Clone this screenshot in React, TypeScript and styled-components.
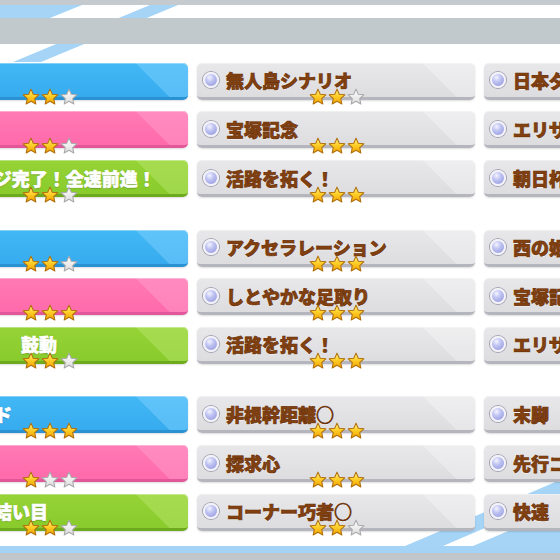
import React, { useId } from "react";
import styled, { createGlobalStyle, css } from "styled-components";

type Tone = "blue" | "pink" | "green" | "gray";

const GlobalStyle = createGlobalStyle`
  html, body { margin: 0; padding: 0; background: #ffffff; }
  body { width: 560px; height: 560px; overflow: hidden; font-family: "Noto Sans CJK JP", "Noto Sans", sans-serif; }
`;

const Page = styled.div`
  position: relative;
  width: 560px;
  height: 560px;
  overflow: hidden;
  background: #ffffff;
  display: flex;
  flex-direction: column;
`;

const Backdrop = styled.svg`
  position: absolute;
  left: 0;
  top: 0;
  z-index: 0;
`;

const TopStrip = styled.div`
  position: relative;
  z-index: 1;
  height: 5px;
  background: #c4cacd;
`;

const TopGap = styled.div`
  height: 13px;
`;

const HeaderBand = styled.div`
  position: relative;
  z-index: 1;
  height: 26px;
  background: #c1c9cd;
`;

const Main = styled.main`
  position: relative;
  z-index: 1;
  flex: 1;
  padding-top: 18.7px;
`;

const Groups = styled.div`
  display: flex;
  flex-direction: column;
  gap: 32.5px;
  margin-left: -90px;
`;

const Group = styled.section`
  display: grid;
  grid-template-columns: repeat(3, 278px);
  column-gap: 9px;
  row-gap: 11.7px;
`;

const tones = {
  blue: { top: "#42b8f5", bottom: "#36acef", edge: "#2a91d2", sheen: "rgba(130,210,255,0.45)" },
  pink: { top: "#ff7ab5", bottom: "#ff6aab", edge: "#e2579a", sheen: "rgba(255,160,205,0.45)" },
  green: { top: "#96d336", bottom: "#89cb2c", edge: "#6eaa1e", sheen: "rgba(185,232,110,0.45)" },
  gray: { top: "#e8e8ea", bottom: "#dddde0", edge: "#b5b5bd", sheen: "rgba(255,255,255,0.28)" },
};

const Card = styled.div<{ $tone: Tone }>`
  position: relative;
  box-sizing: border-box;
  height: 37px;
  border-radius: 5px;
  display: flex;
  align-items: center;
  gap: 7px;
  padding: 1px 0 0 ${(p) => (p.$tone === "gray" ? 6 : 30)}px;
  ${(p) => {
    const t = tones[p.$tone];
    return css`
      background:
        linear-gradient(45deg, transparent calc(100% - 37px), ${t.sheen} calc(100% - 37px)),
        linear-gradient(to bottom, ${t.top}, ${t.bottom});
      border-bottom: 3px solid ${t.edge};
    `;
  }}
  box-shadow: inset 0 1px 0 rgba(255, 255, 255, 0.35), 0 1px 2px rgba(0, 0, 0, 0.14);
`;

const Radio = styled.span`
  flex: none;
  width: 12px;
  height: 12px;
  border-radius: 50%;
  border: 2px solid #f2f2f8;
  box-shadow: 0 0 0 1px #a0a0b2;
  background: radial-gradient(circle at 38% 30%, #f4f4ff 0%, #bfc3f2 38%, #8c92da 100%);
`;

const Label = styled.span<{ $tone: Tone }>`
  font-family: "Noto Sans CJK JP", "Noto Sans", sans-serif;
  font-weight: 900;
  font-size: 18px;
  line-height: 1;
  white-space: pre;
  ${(p) =>
    p.$tone === "gray"
      ? css`
          color: #82410f;
          -webkit-text-stroke: 0.7px #6c3109;
          text-shadow: 0 1px 0 rgba(255, 255, 255, 0.7);
        `
      : css`
          color: #ffffff;
          -webkit-text-stroke: 0.6px #ffffff;
          text-shadow: 0 1px 1px rgba(0, 0, 0, 0.22), 0 0 2px rgba(0, 0, 0, 0.12);
        `}
`;

const StarRow = styled.div`
  position: absolute;
  left: 112px;
  top: 25.5px;
  display: flex;
  gap: 1px;
  z-index: 2;
`;

const StarSvg = styled.svg`
  display: block;
  width: 18px;
  height: 18px;
`;

const STAR =
  "12,1.5 15.06,8.29 22.46,9.1 16.95,14.11 18.47,21.4 12,17.7 5.53,21.4 7.05,14.11 1.54,9.1 8.94,8.29";

function Star({ on }: { on: boolean }) {
  const id = useId().replace(/:/g, "");
  return (
    <StarSvg viewBox="0 0 24 24">
      <defs>
        <linearGradient id={`g${id}`} x1="0" y1="0" x2="0" y2="1">
          {on ? (
            <>
              <stop offset="0" stopColor="#fff38a" />
              <stop offset="0.45" stopColor="#ffd02a" />
              <stop offset="1" stopColor="#f0a000" />
            </>
          ) : (
            <>
              <stop offset="0" stopColor="#ffffff" />
              <stop offset="1" stopColor="#dcdcdc" />
            </>
          )}
        </linearGradient>
      </defs>
      <polygon
        points={STAR}
        fill={`url(#g${id})`}
        stroke={on ? "#b0700e" : "#a9a9ab"}
        strokeWidth="1.4"
        strokeLinejoin="round"
      />
    </StarSvg>
  );
}

function Stars({ n }: { n: number }) {
  return (
    <StarRow>
      {[0, 1, 2].map((i) => (
        <Star key={i} on={i < n} />
      ))}
    </StarRow>
  );
}

type Cell = { text: string; stars: number };
type Row = { tone: Tone; c1: Cell; c2: Cell; c3: Cell };

const groups: Row[][] = [
  [
    { tone: "blue", c1: { text: "末脚", stars: 2 }, c2: { text: "無人島シナリオ", stars: 2 }, c3: { text: "日本ダービー", stars: 3 } },
    { tone: "pink", c1: { text: "直線", stars: 2 }, c2: { text: "宝塚記念", stars: 3 }, c3: { text: "エリザベス女王杯", stars: 3 } },
    { tone: "green", c1: { text: "ステージ完了！全速前進！", stars: 2 }, c2: { text: "活路を拓く！", stars: 3 }, c3: { text: "朝日杯フューチュリティS", stars: 3 } },
  ],
  [
    { tone: "blue", c1: { text: "加速", stars: 2 }, c2: { text: "アクセラレーション", stars: 3 }, c3: { text: "西の姫君", stars: 3 } },
    { tone: "pink", c1: { text: "回復", stars: 3 }, c2: { text: "しとやかな足取り", stars: 3 }, c3: { text: "宝塚記念", stars: 3 } },
    { tone: "green", c1: { text: "高鳴る\u3000\u2002鼓動", stars: 2 }, c2: { text: "活路を拓く！", stars: 3 }, c3: { text: "エリザベス女王杯", stars: 3 } },
  ],
  [
    { tone: "blue", c1: { text: "スピード", stars: 3 }, c2: { text: "非根幹距離○", stars: 3 }, c3: { text: "末脚", stars: 3 } },
    { tone: "pink", c1: { text: "直感", stars: 1 }, c2: { text: "探求心", stars: 3 }, c3: { text: "先行コーナー○", stars: 3 } },
    { tone: "green", c1: { text: "運命の結い目", stars: 2 }, c2: { text: "コーナー巧者○", stars: 2 }, c3: { text: "快速", stars: 3 } },
  ],
];

const Footer = styled.footer`
  position: relative;
  z-index: 1;
  display: flex;
  flex-direction: column;
`;

const FooterBlue = styled.div`
  height: 7px;
  background: #a4d3f6;
`;

const FooterGray = styled.div`
  height: 7px;
  background: #c0c6ca;
`;

export default function App() {
  return (
    <>
      <GlobalStyle />
      <Page>
        <Backdrop width="560" height="560" viewBox="0 0 560 560">
          <polygon points="0,5 82,5 50,18 0,18" fill="#a6d4f7" />
          <polygon points="150,5 178,5 41,62 13,62" fill="#a6d4f7" />
          <polygon points="405,546 560,480 560,546" fill="#a6d4f7" />
          <polygon points="443,546 473,546 560,509 560,496" fill="#ffffff" />
        </Backdrop>
        <TopStrip />
        <TopGap />
        <HeaderBand />
        <Main>
          <Groups>
            {groups.map((g, gi) => (
              <Group key={gi}>
                {g.map((r, ri) => (
                  <React.Fragment key={ri}>
                    <Card $tone={r.tone}>
                      <Label $tone={r.tone}>{r.c1.text}</Label>
                      <Stars n={r.c1.stars} />
                    </Card>
                    <Card $tone="gray">
                      <Radio />
                      <Label $tone="gray">{r.c2.text}</Label>
                      <Stars n={r.c2.stars} />
                    </Card>
                    <Card $tone="gray">
                      <Radio />
                      <Label $tone="gray">{r.c3.text}</Label>
                      <Stars n={r.c3.stars} />
                    </Card>
                  </React.Fragment>
                ))}
              </Group>
            ))}
          </Groups>
        </Main>
        <Footer>
          <FooterBlue />
          <FooterGray />
        </Footer>
      </Page>
    </>
  );
}
